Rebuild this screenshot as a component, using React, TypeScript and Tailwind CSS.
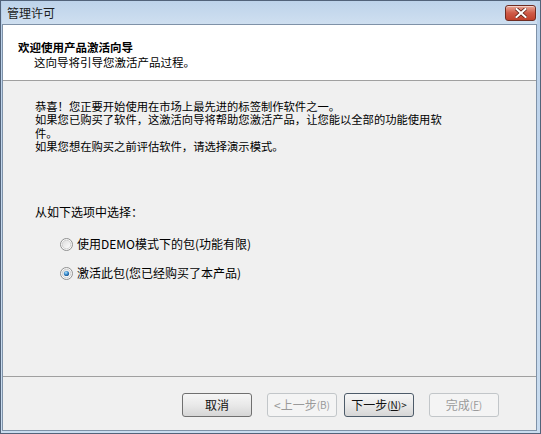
import React from "react";

const FONT = { fontFamily: '"Noto Sans CJK SC", "Noto Sans", sans-serif' };

function Radio({ checked }: { checked?: boolean }) {
  return (
    <svg width="13" height="13" viewBox="0 0 13 13" className="shrink-0">
      <defs>
        <linearGradient id={checked ? "rg1" : "rg0"} x1="0" y1="0" x2="1" y2="1">
          <stop offset="0" stopColor="#dcdcdc" />
          <stop offset="1" stopColor="#ffffff" />
        </linearGradient>
        <radialGradient id="dot" cx="0.4" cy="0.35" r="0.7">
          <stop offset="0" stopColor="#b7e4fa" />
          <stop offset="0.5" stopColor="#3d8fd0" />
          <stop offset="1" stopColor="#1c4e85" />
        </radialGradient>
      </defs>
      <circle cx="6.5" cy="6.5" r="6" fill="#fafafa" stroke="#8e8f8f" strokeWidth="1" />
      <circle cx="6.5" cy="6.5" r="4.3" fill={`url(#${checked ? "rg1" : "rg0"})`} stroke="#c8c8c8" strokeWidth="0.8" />
      {checked && <circle cx="6.5" cy="6.5" r="2.6" fill="url(#dot)" />}
    </svg>
  );
}

function Btn({
  children,
  disabled,
  isDefault,
  className = "",
}: {
  children: React.ReactNode;
  disabled?: boolean;
  isDefault?: boolean;
  className?: string;
}) {
  const base =
    "w-[70px] h-[24px] rounded-[3px] flex items-center justify-center text-[12px] leading-none";
  if (disabled) {
    return (
      <div
        className={`${base} border border-[#c2c6c9] bg-[#f4f4f4] text-[#9a9a9a] ${className}`}
        style={FONT}
      >
        {children}
      </div>
    );
  }
  return (
    <div
      className={`${base} border ${
        isDefault ? "border-[#4d5b69]" : "border-[#707070]"
      } bg-gradient-to-b from-[#f6f6f6] via-[#e9e9e9] to-[#d6d6d6] text-[#111] ${className}`}
      style={FONT}
    >
      {children}
    </div>
  );
}

export default function App() {
  return (
    <div
      className="w-[541px] h-[434px] flex flex-col bg-gradient-to-b from-[#b9d0e9] via-[#c3d7ed] to-[#c9dcef] border border-[#52637a] pl-[1px] pr-[3px] pb-[2px] overflow-hidden"
      style={FONT}
    >
      {/* Title bar */}
      <div className="h-[23px] flex justify-between bg-gradient-to-b from-[#bdd3ea] to-[#cfdff0]">
        <div className="pl-[5px] pt-[4px] text-[12px] leading-[16px] text-[#1b1b1b]">管理许可</div>
        <div className="pt-[4px] pr-[1px]">
          <div className="w-[31px] h-[16px] rounded-[3px] border border-[#6e2c22] bg-gradient-to-b from-[#e7a596] via-[#cf5a47] to-[#c0402b] flex items-center justify-center shadow-[inset_0_1px_0_rgba(255,255,255,0.5)]">
            <svg width="12" height="10" viewBox="0 0 12 10">
              <path
                d="M1.5 1 L10.5 9 M10.5 1 L1.5 9"
                stroke="#5a1a10"
                strokeWidth="3.6"
                strokeLinecap="square"
              />
              <path
                d="M1.5 1 L10.5 9 M10.5 1 L1.5 9"
                stroke="#ffffff"
                strokeWidth="2.1"
                strokeLinecap="square"
              />
            </svg>
          </div>
        </div>
      </div>

      {/* Content */}
      <div className="flex-1 flex flex-col border border-[#7f92a8] bg-[#f0f0f0]">
        {/* Header */}
        <div className="h-[55px] bg-white pt-[15px] pl-[15px] text-[#000]">
          <div className="text-[11.5px] leading-[14px] font-bold">欢迎使用产品激活向导</div>
          <div className="text-[11.5px] leading-[14px] pl-[16px] pt-[1px]">这向导将引导您激活产品过程。</div>
        </div>
        <div className="h-[1px] bg-[#a0a0a0]" />

        {/* Body */}
        <div className="h-[295px] pl-[32px] pt-[19px] text-[#000]">
          <div className="text-[11.3px] leading-[13.3px] whitespace-nowrap">
            <div>恭喜！您正要开始使用在市场上最先进的标签制作软件之一。</div>
            <div>如果您已购买了软件，这激活向导将帮助您激活产品，让您能以全部的功能使用软</div>
            <div>件。</div>
            <div>如果您想在购买之前评估软件，请选择演示模式。</div>
          </div>
          <div className="mt-[52px] text-[12px] leading-[14px]">从如下选项中选择：</div>
          <div className="mt-[15px] pl-[25px] flex items-center gap-[4px] h-[20px] text-[12px]">
            <Radio />
            <span>使用DEMO模式下的包(功能有限)</span>
          </div>
          <div className="mt-[9px] pl-[25px] flex items-center gap-[4px] h-[20px] text-[12px]">
            <Radio checked />
            <span>激活此包(您已经购买了本产品)</span>
          </div>
        </div>
        <div className="h-[1px] bg-[#a0a0a0]" />

        {/* Footer */}
        <div className="flex-1 flex items-start pt-[16px] pl-[179px]">
          <Btn>取消</Btn>
          <Btn disabled className="ml-[15px]">
            <span>&lt;上一步</span>
            <span className="text-[10px]">(B)</span>
          </Btn>
          <Btn isDefault className="ml-[7px]">
            <span>下一步</span>
            <span className="text-[10px]">
              (<span className="underline">N</span>)&gt;
            </span>
          </Btn>
          <Btn disabled className="ml-[15px]">
            <span>完成</span>
            <span className="text-[10px]">
              (<span className="underline">F</span>)
            </span>
          </Btn>
        </div>
      </div>
    </div>
  );
}
